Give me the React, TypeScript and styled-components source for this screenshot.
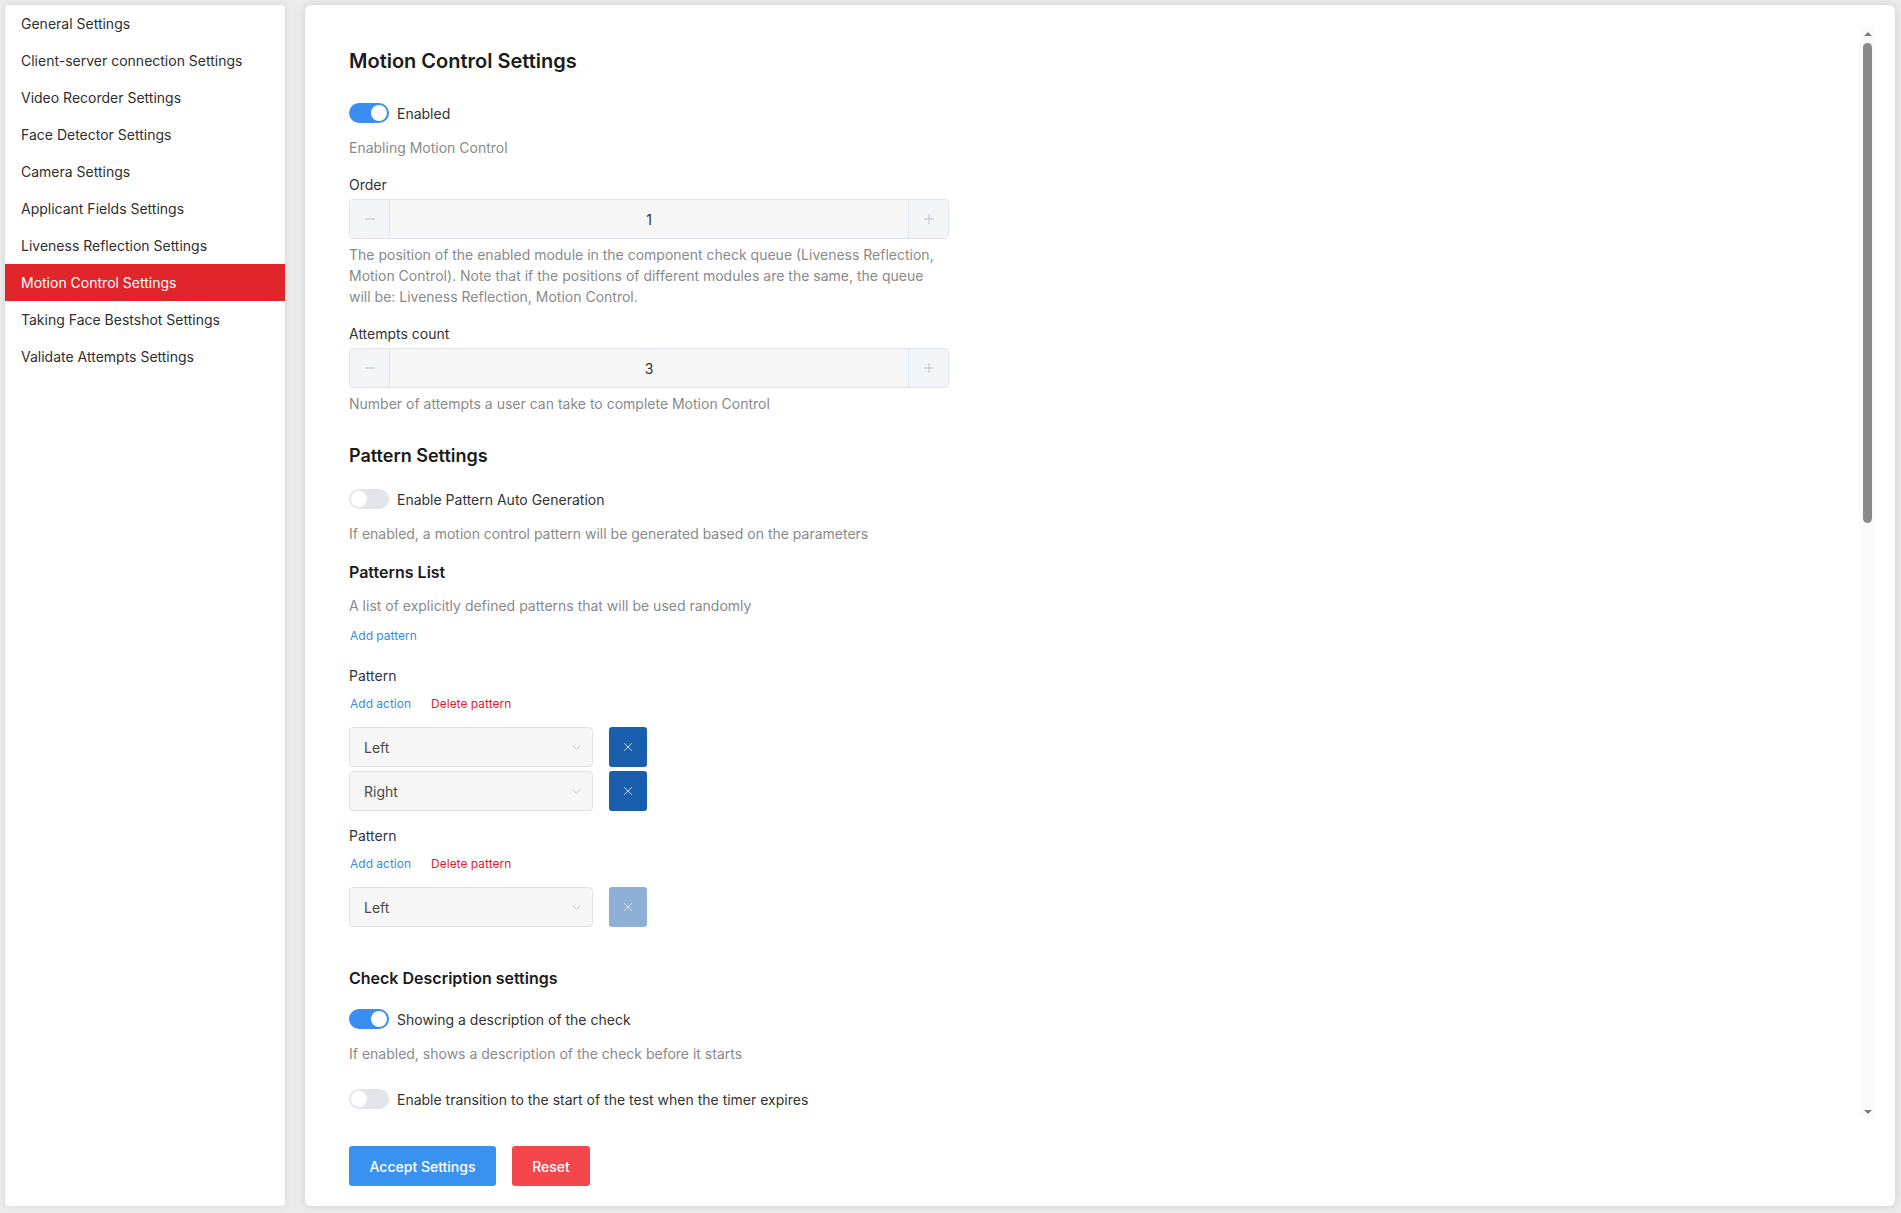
import React from "react";
import styled, { createGlobalStyle } from "styled-components";
import { ChevronDown, X } from "lucide-react";

const GlobalStyle = createGlobalStyle`
  html, body {
    margin: 0;
    padding: 0;
    height: 100%;
    background: #ebebeb;
    font-family: Inter, "Noto Sans", Arial, sans-serif;
    font-size: 14px;
    color: #333;
  }
  * { box-sizing: border-box; }
  #root { height: 100%; }
`;

const menu = [
  "General Settings",
  "Client-server connection Settings",
  "Video Recorder Settings",
  "Face Detector Settings",
  "Camera Settings",
  "Applicant Fields Settings",
  "Liveness Reflection Settings",
  "Motion Control Settings",
  "Taking Face Bestshot Settings",
  "Validate Attempts Settings",
];

const Layout = styled.div`
  display: flex;
  gap: 20px;
  height: 100vh;
  padding: 5px 6px 7px 5px;
`;

const Sidebar = styled.nav`
  width: 280px;
  flex-shrink: 0;
  background: #fff;
  border-radius: 4px;
  box-shadow: 0 0 6px rgba(0, 0, 0, 0.1);
  display: flex;
  flex-direction: column;
  overflow: hidden;
`;

const MenuItem = styled.div<{ $active?: boolean }>`
  height: 37px;
  display: flex;
  align-items: center;
  padding-left: 16px;
  font-size: 14px;
  color: ${(p) => (p.$active ? "#fff" : "#2f2f2f")};
  background: ${(p) => (p.$active ? "#e0252b" : "transparent")};
  cursor: pointer;
`;

const Panel = styled.main`
  flex: 1;
  background: #fff;
  border-radius: 6px;
  box-shadow: 0 0 8px rgba(0, 0, 0, 0.12);
  display: flex;
  flex-direction: column;
  padding: 21px 20px 20px 44px;
  min-width: 0;
`;

const Body = styled.div`
  flex: 1;
  display: flex;
  min-height: 0;
`;

const Scroll = styled.div`
  flex: 1;
  overflow: hidden;
  padding-top: 21px;
`;

const ScrollBar = styled.div`
  width: 15px;
  flex-shrink: 0;
  background: #fafafa;
  display: flex;
  flex-direction: column;
`;

const ScrollArrow = styled.div<{ $dir: "up" | "down" }>`
  height: 15px;
  display: flex;
  align-items: center;
  justify-content: center;

  &::before {
    content: "";
    width: 0;
    height: 0;
    border-left: 4px solid transparent;
    border-right: 4px solid transparent;
    ${(p) => (p.$dir === "up" ? "border-bottom" : "border-top")}: 4px solid #7c7c7c;
  }
`;

const ScrollTrack = styled.div`
  flex: 1;
  padding: 2px 3px;
`;

const Thumb = styled.div`
  width: 9px;
  height: 480px;
  border-radius: 5px;
  background: #8a8a8a;
`;

const Content = styled.div`
  display: flex;
  flex-direction: column;
  align-items: flex-start;
`;

const Title = styled.h1`
  margin: 0;
  font-size: 20px;
  line-height: 28px;
  font-weight: 600;
  color: #1b1b1b;
`;

const Heading = styled.h2<{ $size?: number }>`
  margin: 0;
  font-size: ${(p) => p.$size || 16}px;
  line-height: ${(p) => (p.$size || 16) + 8}px;
  font-weight: 600;
  color: #1b1b1b;
`;

const Gap = styled.div<{ $h: number }>`
  height: ${(p) => p.$h}px;
  flex-shrink: 0;
`;

const SwitchRow = styled.label`
  display: flex;
  align-items: center;
  gap: 8px;
  height: 20px;
  font-size: 14px;
  color: #333;
  cursor: pointer;
`;

const Track = styled.span<{ $on?: boolean }>`
  position: relative;
  width: 40px;
  height: 20px;
  border-radius: 10px;
  background: ${(p) => (p.$on ? "#3a8ef1" : "#e3e5ea")};
  flex-shrink: 0;

  &::after {
    content: "";
    position: absolute;
    top: 2px;
    left: ${(p) => (p.$on ? "22px" : "2px")};
    width: 16px;
    height: 16px;
    border-radius: 50%;
    background: #fff;
  }
`;

const Help = styled.p`
  margin: 0;
  max-width: 590px;
  font-size: 14px;
  line-height: 21px;
  color: #8a8a8a;
`;

const Label = styled.div`
  font-size: 14px;
  line-height: 21px;
  color: #333;
`;

const NumberBox = styled.div`
  display: flex;
  width: 600px;
  height: 40px;
  border: 1px solid #e0e4eb;
  border-radius: 4px;
  overflow: hidden;
  background: #f7f7f8;
`;

const StepButton = styled.button<{ $side: "left" | "right" }>`
  width: 40px;
  flex-shrink: 0;
  border: none;
  ${(p) => (p.$side === "left" ? "border-right" : "border-left")}: 1px solid #e0e4eb;
  background: #f3f5f9;
  display: flex;
  align-items: center;
  justify-content: center;
  padding: 0;
  cursor: pointer;
`;

const NumberValue = styled.div`
  flex: 1;
  display: flex;
  align-items: center;
  justify-content: center;
  font-size: 14px;
  color: #333;
`;

const LinkRow = styled.div`
  display: flex;
  gap: 19px;
`;

const LinkButton = styled.button<{ $danger?: boolean }>`
  border: none;
  background: none;
  padding: 0 0 0 1px;
  font-family: inherit;
  font-size: 12px;
  line-height: 18px;
  color: ${(p) => (p.$danger ? "#e0202a" : "#3a8be3")};
  cursor: pointer;
`;

const ActionList = styled.div`
  display: flex;
  flex-direction: column;
  gap: 4px;
`;

const ActionRow = styled.div`
  display: flex;
  align-items: center;
  gap: 16px;
`;

const Select = styled.div`
  width: 244px;
  height: 40px;
  border: 1px solid #e2e2e2;
  border-radius: 4px;
  background: #f7f7f7;
  display: flex;
  align-items: center;
  justify-content: space-between;
  padding: 0 8px 0 14px;
  font-size: 14px;
  color: #4a4a4a;
`;

const RemoveButton = styled.button<{ $disabled?: boolean }>`
  width: 38px;
  height: 40px;
  border: none;
  border-radius: 3px;
  background: ${(p) => (p.$disabled ? "#8eafd6" : "#1a5eae")};
  display: flex;
  align-items: center;
  justify-content: center;
  padding: 0;
  cursor: ${(p) => (p.$disabled ? "default" : "pointer")};
`;

const Footer = styled.div`
  display: flex;
  gap: 16px;
  margin-top: 27px;
`;

const ActionButton = styled.button<{ $variant: "primary" | "danger"; $w: number }>`
  width: ${(p) => p.$w}px;
  height: 40px;
  border: none;
  border-radius: 3px;
  background: ${(p) => (p.$variant === "primary" ? "#3a92f0" : "#f4474c")};
  color: #fff;
  font-family: inherit;
  font-size: 14px;
  font-weight: 500;
  cursor: pointer;
`;

const Toggle = ({ on, label }: { on?: boolean; label: string }) => (
  <SwitchRow>
    <Track $on={on} />
    <span>{label}</span>
  </SwitchRow>
);

const Minus = () => (
  <svg width="12" height="12" viewBox="0 0 12 12">
    <path d="M1 6h10" stroke="#b9c2d2" strokeWidth="1" />
  </svg>
);

const Plus = () => (
  <svg width="12" height="12" viewBox="0 0 12 12">
    <path d="M1 6h10M6 1v10" stroke="#b9c2d2" strokeWidth="1" />
  </svg>
);

const NumberInput = ({ value }: { value: number }) => (
  <NumberBox>
    <StepButton $side="left">
      <Minus />
    </StepButton>
    <NumberValue>{value}</NumberValue>
    <StepButton $side="right">
      <Plus />
    </StepButton>
  </NumberBox>
);

const PatternBlock = ({ actions }: { actions: string[] }) => (
  <>
    <Label>Pattern</Label>
    <Gap $h={9} />
    <LinkRow>
      <LinkButton>Add action</LinkButton>
      <LinkButton $danger>Delete pattern</LinkButton>
    </LinkRow>
    <Gap $h={14} />
    <ActionList>
      {actions.map((a, i) => (
        <ActionRow key={i}>
          <Select>
            <span>{a}</span>
            <ChevronDown size={15} strokeWidth={1} color="#b3b3b3" />
          </Select>
          <RemoveButton $disabled={actions.length === 1}>
            <X size={14} strokeWidth={1.6} color={actions.length === 1 ? "#dce7f4" : "#cfe0f6"} />
          </RemoveButton>
        </ActionRow>
      ))}
    </ActionList>
  </>
);

export default function App() {
  return (
    <>
      <GlobalStyle />
      <Layout>
        <Sidebar>
          {menu.map((item) => (
            <MenuItem key={item} $active={item === "Motion Control Settings"}>
              {item}
            </MenuItem>
          ))}
        </Sidebar>
        <Panel>
          <Body>
            <Scroll>
              <Content>
                <Title>Motion Control Settings</Title>
                <Gap $h={28} />
                <Toggle on label="Enabled" />
                <Gap $h={14} />
                <Help>Enabling Motion Control</Help>
                <Gap $h={16} />
                <Label>Order</Label>
                <Gap $h={4} />
                <NumberInput value={1} />
                <Gap $h={5} />
                <Help>
                  The position of the enabled module in the component check queue (Liveness Reflection,
                  Motion Control). Note that if the positions of different modules are the same, the queue
                  will be: Liveness Reflection, Motion Control.
                </Help>
                <Gap $h={16} />
                <Label>Attempts count</Label>
                <Gap $h={4} />
                <NumberInput value={3} />
                <Gap $h={5} />
                <Help>Number of attempts a user can take to complete Motion Control</Help>

                <Gap $h={29} />
                <Heading $size={18}>Pattern Settings</Heading>
                <Gap $h={20} />
                <Toggle label="Enable Pattern Auto Generation" />
                <Gap $h={14} />
                <Help>If enabled, a motion control pattern will be generated based on the parameters</Help>
                <Gap $h={16} />
                <Heading>Patterns List</Heading>
                <Gap $h={11} />
                <Help>A list of explicitly defined patterns that will be used randomly</Help>
                <Gap $h={11} />
                <LinkButton>Add pattern</LinkButton>
                <Gap $h={20} />
                <PatternBlock actions={["Left", "Right"]} />
                <Gap $h={14} />
                <PatternBlock actions={["Left"]} />

                <Gap $h={39} />
                <Heading>Check Description settings</Heading>
                <Gap $h={19} />
                <Toggle on label="Showing a description of the check" />
                <Gap $h={14} />
                <Help>If enabled, shows a description of the check before it starts</Help>
                <Gap $h={25} />
                <Toggle label="Enable transition to the start of the test when the timer expires" />
              </Content>
            </Scroll>
            <ScrollBar>
              <ScrollArrow $dir="up" />
              <ScrollTrack>
                <Thumb />
              </ScrollTrack>
              <ScrollArrow $dir="down" />
            </ScrollBar>
          </Body>
          <Footer>
            <ActionButton $variant="primary" $w={147}>
              Accept Settings
            </ActionButton>
            <ActionButton $variant="danger" $w={78}>
              Reset
            </ActionButton>
          </Footer>
        </Panel>
      </Layout>
    </>
  );
}
